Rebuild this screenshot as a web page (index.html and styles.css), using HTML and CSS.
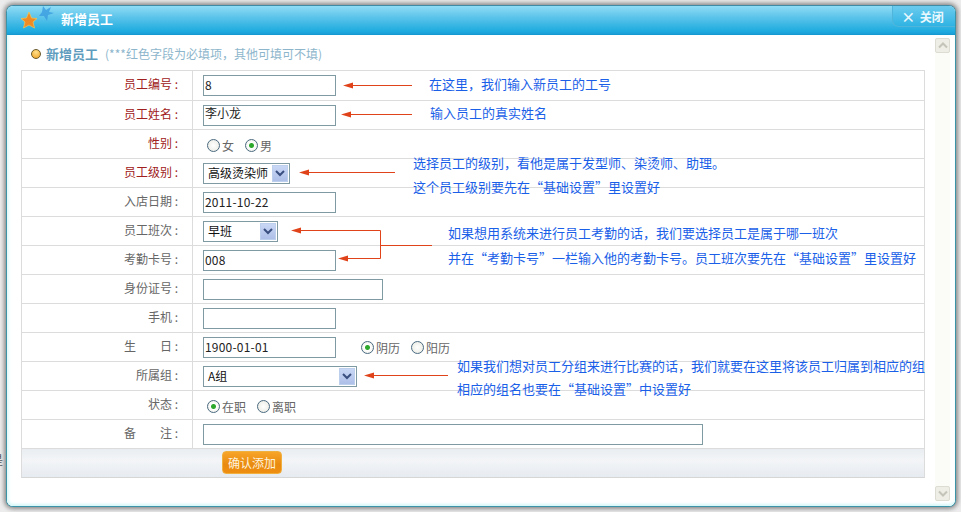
FILE: index.html
```html
<!DOCTYPE html>
<html lang="zh">
<head>
<meta charset="utf-8">
<title>新增员工</title>
<link rel="stylesheet" href="styles.css">
</head>
<body>
<span class="behind">是</span>
<div class="window">
  <header class="titlebar">
    <svg class="stars" width="36" height="24" viewBox="0 0 36 24">
      <polygon points="24,0 27,4 32,1 30,6 35,7 29,9 28,15 25,10 20,10 23,6" fill="#3d9fe0" opacity=".85"/>
      <polygon points="10,6 12.500,12 18,12.500 14,16 15.500,22 10,19 4.500,22 6,16 2,12.500 7.500,12" fill="#f08a24" stroke="#f9c74f" stroke-width=".7"/>
    </svg>
    <span class="title">新增员工</span>
    <button class="close" type="button"><span class="close-x">×</span> 关闭</button>
  </header>
  <div class="body">
    <main class="main">
      <h1 class="heading"><span class="bullet"></span><b>新增员工</b><span class="hint">(***红色字段为必填项，其他可填可不填)</span></h1>
      <div class="form">
        <div class="row first"><label class="lbl req">员工编号 :</label><div class="cell"><span class="input w133">8</span></div></div>
        <div class="row"><label class="lbl req">员工姓名 :</label><div class="cell"><span class="input w133 top">李小龙</span></div></div>
        <div class="row"><label class="lbl req">性别 :</label><div class="cell radios"><span class="radio"></span><span class="opt">女</span><span class="radio on"></span><span class="opt">男</span></div></div>
        <div class="row"><label class="lbl req">员工级别 :</label><div class="cell"><span class="select w87"><span class="val">高级烫染师</span><span class="arrow"><svg width="10" height="7" viewBox="0 0 10 7"><path d="M1 1l4 4 4-4" fill="none" stroke="#3a4f80" stroke-width="2"/></svg></span></span></div></div>
        <div class="row"><label class="lbl">入店日期 :</label><div class="cell"><span class="input w133">2011-10-22</span></div></div>
        <div class="row"><label class="lbl">员工班次 :</label><div class="cell"><span class="select w75"><span class="val">早班</span><span class="arrow"><svg width="10" height="7" viewBox="0 0 10 7"><path d="M1 1l4 4 4-4" fill="none" stroke="#3a4f80" stroke-width="2"/></svg></span></span></div></div>
        <div class="row"><label class="lbl">考勤卡号 :</label><div class="cell"><span class="input w133">008</span></div></div>
        <div class="row"><label class="lbl">身份证号 :</label><div class="cell"><span class="input w180"></span></div></div>
        <div class="row"><label class="lbl">手机 :</label><div class="cell"><span class="input w133"></span></div></div>
        <div class="row"><label class="lbl">生　　日 :</label><div class="cell"><span class="input w133">1900-01-01</span><span class="radio on gap"></span><span class="opt">阴历</span><span class="radio"></span><span class="opt">阳历</span></div></div>
        <div class="row"><label class="lbl">所属组 :</label><div class="cell"><span class="select w154"><span class="val">A组</span><span class="arrow"><svg width="10" height="7" viewBox="0 0 10 7"><path d="M1 1l4 4 4-4" fill="none" stroke="#3a4f80" stroke-width="2"/></svg></span></span></div></div>
        <div class="row"><label class="lbl">状态 :</label><div class="cell radios"><span class="radio on"></span><span class="opt">在职</span><span class="radio"></span><span class="opt">离职</span></div></div>
        <div class="row"><label class="lbl">备　　注 :</label><div class="cell"><span class="input w500"></span></div></div>
        <div class="actions"><button class="submit" type="button">确认添加</button></div>
      </div>
    </main>
    <aside class="scrollbar">
      <span class="sb-btn"><svg width="10" height="7" viewBox="0 0 10 7"><path d="M1 5.500l4-4 4 4" fill="none" stroke="#c4c4b8" stroke-width="2"/></svg></span>
      <span class="sb-btn"><svg width="10" height="7" viewBox="0 0 10 7"><path d="M1 1.500l4 4 4-4" fill="none" stroke="#c4c4b8" stroke-width="2"/></svg></span>
    </aside>
  </div>
</div>
<svg class="arrows" width="961" height="512" viewBox="0 0 961 512">
  <g fill="none" stroke="#e0431a" stroke-width="1">
    <path d="M412 85.500H352"/>
    <path d="M412 114.500H350"/>
    <path d="M395 172.500H308"/>
    <path d="M300 230.500H380.500V258.500H347"/>
    <path d="M381 245.500H432"/>
    <path d="M448 375.500H372"/>
  </g>
  <g fill="#e0431a">
    <path d="M343 85.500l10-3v6z"/>
    <path d="M341 114.500l10-3v6z"/>
    <path d="M299 172.500l10-3v6z"/>
    <path d="M291 230.500l10-3v6z"/>
    <path d="M338 258.500l10-3v6z"/>
    <path d="M364 375.500l10-3v6z"/>
  </g>
</svg>
<p class="note" style="left:429px;top:75px">在这里，我们输入新员工的工号</p>
<p class="note" style="left:430px;top:104px">输入员工的真实姓名</p>
<p class="note" style="left:413px;top:154px">选择员工的级别，看他是属于发型师、染烫师、助理。</p>
<p class="note" style="left:413px;top:178px">这个员工级别要先在“基础设置”里设置好</p>
<p class="note" style="left:448px;top:224px">如果想用系统来进行员工考勤的话，我们要选择员工是属于哪一班次</p>
<p class="note" style="left:448px;top:249px">并在“考勤卡号”一栏输入他的考勤卡号。员工班次要先在“基础设置”里设置好</p>
<p class="note" style="left:457px;top:357px">如果我们想对员工分组来进行比赛的话，我们就要在这里将该员工归属到相应的组</p>
<p class="note" style="left:457px;top:380px">相应的组名也要在“基础设置”中设置好</p>
</body>
</html>
```
FILE: styles.css
```css
* { box-sizing: border-box; }
html, body { margin: 0; height: 100%; }
body {
  position: relative;
  width: 961px;
  height: 512px;
  overflow: hidden;
  padding: 5px 5px 5px 6px;
  background: #ececec;
  font-family: "Noto Sans CJK SC", "Liberation Sans", sans-serif;
  font-size: 12px;
  color: #666;
}
.behind { position: absolute; left: -9px; top: 451px; color: #555; }
.window {
  height: 502px;
  display: flex;
  flex-direction: column;
  background: #fff;
  border: 1px solid #3b93a8;
  border-top-color: #3f8ba5;
  border-radius: 7px;
  box-shadow: 0 0 4px 2px #8a8a8a;
}
.titlebar {
  height: 29px;
  flex: none;
  display: flex;
  align-items: center;
  padding: 0 0 0 12px;
  border-radius: 6px 6px 0 0;
  background: linear-gradient(#8fdcf5, #5cc4ea 40%, #1eabdf 90%, #1a9fd5);
  border-bottom: 1px solid #149ad0;
}
.stars { flex: none; margin-top: -5px; }
.title { margin-left: 6px; margin-top: -3px; color: #fff; font-weight: 700; font-size: 13px; }
.close {
  margin-left: auto;
  align-self: flex-start;
  height: 21px;
  width: 63px;
  padding: 0 3px 2px 0;
  border: 1px solid #4fb5da;
  border-width: 0 0 1px 1px;
  border-radius: 0 6px 0 7px;
  background: linear-gradient(#6ccbee, #2fb3e3);
  color: #eaf8fd;
  font: 700 12px "Noto Sans CJK SC", sans-serif;
}
.close-x { font-size: 14px; margin-right: 2px; }
.body {
  flex: 1;
  display: flex;
  min-height: 0;
  border-radius: 0 0 6px 6px;
  background: #fff;
  box-shadow: inset 0 -3px 3px -1px #d6f8f8, inset 3px 0 3px -1px #e2fbfb;
}
.main { width: 928px; flex: none; padding-left: 14px; }
.heading {
  margin: 0;
  height: 35px;
  display: flex;
  align-items: center;
  padding: 2px 0 0 10px;
  font-size: 12px;
  font-weight: 400;
  color: #5f9cbe;
}
.heading b { margin-left: 5px; font-size: 13px; }
.bullet {
  width: 10px; height: 10px; border-radius: 50%;
  border: 1px solid #6b5a2a;
  background: radial-gradient(circle at 50% 30%, #ffe08a, #f0a020);
}
.hint { margin-left: 7px; color: #8db6cc; }
.form { width: 904px; border: 1px solid #dcdcdc; border-bottom-color: #d6d6d6; }
.row { display: flex; height: 29px; border-bottom: 1px solid #dcdcdc; }
.row.first { height: 30px; }
.lbl {
  width: 171px;
  flex: none;
  padding-right: 14px;
  text-align: right;
  line-height: 25px;
  border-right: 1px solid #dcdcdc;
}
.lbl.req { color: #a02020; }
.cell { flex: 1; display: flex; align-items: center; padding-left: 10px; color: #333; }
.input, .select {
  height: 21px;
  display: flex;
  align-items: center;
  border: 1px solid #7f9aa3;
  background: #fff;
  color: #222;
  padding: 0 0 2px 1px;
  line-height: 17px;
  flex: none;
  letter-spacing: .2px;
}
.top { align-items: flex-start; padding-bottom: 0; line-height: 14px; letter-spacing: 0; }
.w133 { width: 133px; }
.w180 { width: 180px; }
.w500 { width: 500px; }
.w87 { width: 87px; }
.w75 { width: 75px; }
.w154 { width: 154px; }
.select { justify-content: space-between; padding: 1px 1px 1px 4px; letter-spacing: 0; }
.val { color: #111; position: relative; top: -1px; }
.arrow {
  width: 16px; height: 17px;
  display: flex; align-items: center; justify-content: center;
  background: linear-gradient(#c9d7f5, #aebfe8);
  border: 1px solid #bcd0ee;
}
.radios { padding-left: 14px; padding-top: 2px; }
.radio {
  width: 13px; height: 13px; flex: none;
  border-radius: 50%;
  border: 1px solid #4a6a80;
  background: radial-gradient(circle, #fff, #e8e8e0);
}
.radio.on { background: radial-gradient(circle, #2da82d 0 2px, #fff 3px, #e8e8e0); }
.gap { margin-left: 25px; }
.opt { margin: 0 11px 0 2px; color: #666; }
.actions {
  height: 28px;
  padding: 2px 0 0 200px;
  background: linear-gradient(#e9edf1, #f3f5f7 40%, #e6ebf1);
}
.submit {
  display: block;
  width: 60px; height: 23px; padding: 0;
  border: 1px solid #f0b040;
  border-radius: 4px;
  background: linear-gradient(#f7a52a, #e98a10 60%, #ee8f12);
  color: #fff3dc;
  font: 12px "Noto Sans CJK SC", sans-serif;
}
.scrollbar {
  width: 15px;
  margin: 3px 0 5px;
  display: flex;
  flex-direction: column;
  justify-content: space-between;
  background: #fbfbf8;
}
.sb-btn {
  width: 15px; height: 15px;
  display: flex; align-items: center; justify-content: center;
  background: #eeeee6;
  border: 1px solid #dcdcd2;
  border-radius: 2px;
}
.arrows { position: absolute; left: 0; top: 0; pointer-events: none; }
.note {
  position: absolute;
  margin: 0;
  font-size: 13px;
  line-height: 18px;
  color: #1a5fe8;
  white-space: nowrap;
}
```
